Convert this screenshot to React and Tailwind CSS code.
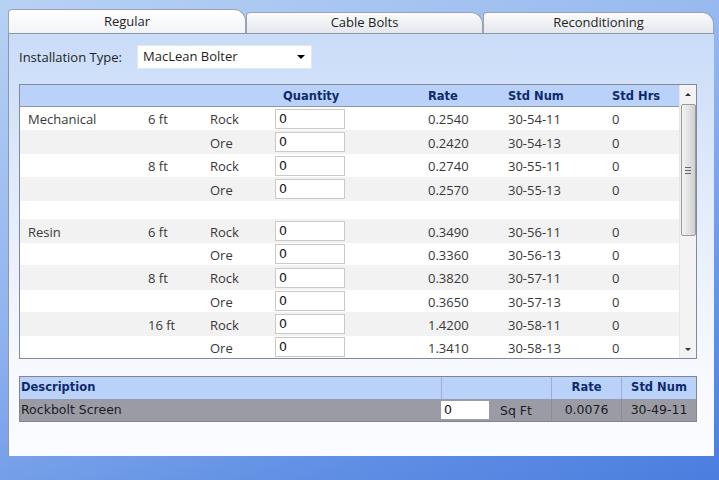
import React from 'react';

const rows = [
  { h: 23, bg: 'bg-white', a: 'Mechanical', b: '6 ft', c: 'Rock', rate: '0.2540', num: '30-54-11' },
  { h: 24, bg: 'bg-[#f2f2f2]', a: '', b: '', c: 'Ore', rate: '0.2420', num: '30-54-13' },
  { h: 23, bg: 'bg-white', a: '', b: '8 ft', c: 'Rock', rate: '0.2740', num: '30-55-11' },
  { h: 24, bg: 'bg-[#f2f2f2]', a: '', b: '', c: 'Ore', rate: '0.2570', num: '30-55-13' },
  { h: 18, bg: 'bg-white', blank: true },
  { h: 24, bg: 'bg-[#f2f2f2]', a: 'Resin', b: '6 ft', c: 'Rock', rate: '0.3490', num: '30-56-11' },
  { h: 22, bg: 'bg-white', a: '', b: '', c: 'Ore', rate: '0.3360', num: '30-56-13' },
  { h: 25, bg: 'bg-[#f2f2f2]', a: '', b: '8 ft', c: 'Rock', rate: '0.3820', num: '30-57-11' },
  { h: 22, bg: 'bg-white', a: '', b: '', c: 'Ore', rate: '0.3650', num: '30-57-13' },
  { h: 24, bg: 'bg-[#f2f2f2]', a: '', b: '16 ft', c: 'Rock', rate: '1.4200', num: '30-58-11' },
  { h: 22, bg: 'bg-white', a: '', b: '', c: 'Ore', rate: '1.3410', num: '30-58-13' },
];

const cols = 'grid grid-cols-[128px_62px_65px_153px_80px_104px_65px]';

const Tab = ({ label, active, w }) => (
  <div
    className={`${w} ${active ? 'h-[24px] mt-0 bg-gradient-to-b from-white to-[#f1f3f6] z-10' : 'h-[21px] mt-[3px] bg-gradient-to-b from-[#fbfbfc] to-[#e4e7ec]'} flex items-center justify-center border border-b-0 border-[#9aa3b3] rounded-tl-[4px] rounded-tr-[12px] text-[13px] text-[#222]`}
  >
    {label}
  </div>
);

export default function App() {
  return (
    <div className="w-[719px] h-[480px] overflow-hidden bg-[linear-gradient(160deg,#b8d2f4_0%,#8fb3ee_45%,#5f8fe4_80%,#4a7ddf_100%)] pt-[9px] pl-[8px] font-['Open_Sans',sans-serif]">
      <div className="flex items-end w-[706px]">
        <Tab label="Regular" active w="w-[238px]" />
        <Tab label="Cable Bolts" w="w-[237px]" />
        <Tab label="Reconditioning" w="w-[231px]" />
      </div>
      <div className="w-[706px] h-[423px] border-t border-l border-[#8e97a8] bg-[linear-gradient(180deg,#c9dcf8_0%,#e6eefc_45%,#f7f9fe_80%,#fafcff_100%)] pl-[10px] pt-[11px]">
        <div className="flex items-center h-[24px]">
          <span className="text-[13px] text-[#1e1e1e] w-[118px] pt-[2px]">Installation Type:</span>
          <div className="w-[175px] h-[24px] bg-white border border-[#e2e8f2] flex items-center pl-[5px] pr-[6px] text-[13px] text-[#1e1e1e]">
            <span className="flex-1">MacLean Bolter</span>
            <span className="w-0 h-0 border-l-[4px] border-r-[4px] border-t-[4px] border-l-transparent border-r-transparent border-t-black" />
          </div>
        </div>

        <div className="mt-[15px] w-[678px] h-[275px] border border-[#828a99] bg-white flex">
          <div className="w-[659px] flex flex-col">
            <div className={`${cols} h-[22px] bg-[#bad2fa] border-b border-[#8b96aa] items-center pt-[2px] font-['DejaVu_Sans',sans-serif] font-bold text-[11.5px] text-[#0f2a6c]`}>
              <span />
              <span />
              <span />
              <span className="pl-[8px]">Quantity</span>
              <span>Rate</span>
              <span>Std Num</span>
              <span>Std Hrs</span>
            </div>
            {rows.map((r, i) => (
              <div key={i} className={`${cols} ${r.bg} items-center text-[13px] text-[#383838]`} style={{ height: r.h }}>
                {r.blank ? null : (
                  <>
                    <span className="pl-[8px] pt-[3px]">{r.a}</span>
                    <span className="pt-[3px]">{r.b}</span>
                    <span className="pt-[3px]">{r.c}</span>
                    <span>
                      <span className="block w-[70px] h-[20px] bg-white border border-[#c9c9c9] pl-[3px] leading-[17px] text-[#111] font-['DejaVu_Sans',sans-serif] text-[12.5px]">0</span>
                    </span>
                    <span className="pt-[3px]">{r.rate}</span>
                    <span className="pt-[3px]">{r.num}</span>
                    <span className="pt-[3px]">0</span>
                  </>
                )}
              </div>
            ))}
          </div>
          <div className="w-[17px] flex flex-col bg-[#f3f3f3] border-l border-[#e6e6e6] items-center">
            <div className="h-[19px] w-full flex items-center justify-center">
              <span className="w-0 h-0 border-l-[3px] border-r-[3px] border-b-[3px] border-l-transparent border-r-transparent border-b-[#333]" />
            </div>
            <div className="w-[15px] h-[132px] rounded-[2px] border border-[#9a9a9a] bg-gradient-to-r from-[#f4f4f4] via-[#e2e2e2] to-[#cfcfcf] flex flex-col items-center justify-center gap-[2px]">
              <span className="w-[6px] h-px bg-[#666]" />
              <span className="w-[6px] h-px bg-[#666]" />
              <span className="w-[6px] h-px bg-[#666]" />
            </div>
            <div className="flex-1" />
            <div className="h-[17px] w-full flex items-center justify-center">
              <span className="w-0 h-0 border-l-[3px] border-r-[3px] border-t-[3px] border-l-transparent border-r-transparent border-t-[#333]" />
            </div>
          </div>
        </div>

        <div className="mt-[17px] w-[678px] border border-[#7e8696] font-['DejaVu_Sans',sans-serif]">
          <div className="grid grid-cols-[421px_110px_70px_75px] h-[22px] bg-[#bad2fa] items-center font-bold text-[11.5px] text-[#0f2a6c]">
            <span className="pl-[1px]">Description</span>
            <span className="h-full border-l border-[#9fb0cc]" />
            <span className="h-full border-l border-[#9fb0cc] flex items-center justify-center">Rate</span>
            <span className="h-full border-l border-[#9fb0cc] flex items-center justify-center">Std Num</span>
          </div>
          <div className="grid grid-cols-[421px_110px_70px_75px] h-[22px] bg-[#9b9ba5] items-center text-[12.5px] text-[#1c1c1c]">
            <span className="pl-[1px]">Rockbolt Screen</span>
            <span className="h-full flex items-center">
              <span className="block w-[48px] h-[18px] bg-white pl-[3px] leading-[18px] text-[#111]">0</span>
              <span className="ml-[11px] pt-[3px]">Sq Ft</span>
            </span>
            <span className="h-full border-l border-[#8d8d96] flex items-center justify-center">0.0076</span>
            <span className="h-full border-l border-[#8d8d96] flex items-center justify-center">30-49-11</span>
          </div>
        </div>
      </div>
    </div>
  );
}
